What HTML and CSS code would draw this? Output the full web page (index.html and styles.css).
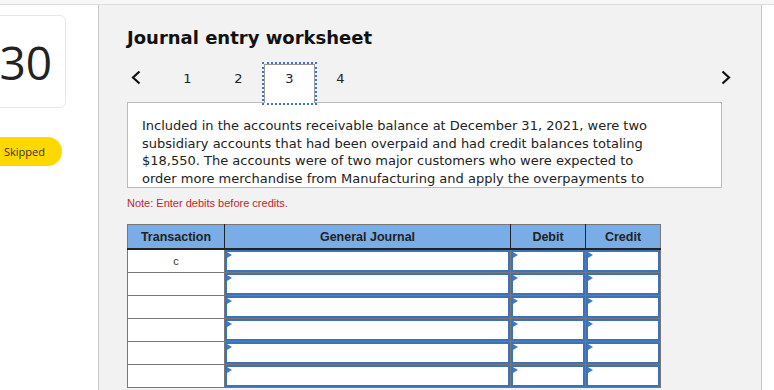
FILE: index.html
```html
<!DOCTYPE html>
<html>
<head>
<meta charset="utf-8">
<link rel="stylesheet" href="styles.css">
</head>
<body>
<div class="topbar"></div>
<div class="main">
  <aside class="side">
    <div class="qcard"><span class="qnum">30</span></div>
    <div class="pill">Skipped</div>
  </aside>
  <section class="panel">
    <h1 class="title">Journal entry worksheet</h1>
    <nav class="tabs">
      <span class="arrow arrow-left"><svg width="10" height="15" viewBox="0 0 10 15"><path d="M8.5 1.5 L2 7.5 L8.5 13.5" fill="none" stroke="#111" stroke-width="2.2"/></svg></span>
      <span class="tab">1</span>
      <span class="tab">2</span>
      <span class="tab active">3</span>
      <span class="tab">4</span>
      <span class="spacer"></span>
      <span class="arrow arrow-right"><svg width="10" height="15" viewBox="0 0 10 15"><path d="M1.5 1.5 L8 7.5 L1.5 13.5" fill="none" stroke="#111" stroke-width="2.2"/></svg></span>
    </nav>
    <div class="textbox">
      <p>Included in the accounts receivable balance at December 31, 2021, were two subsidiary accounts that had been overpaid and had credit balances totaling $18,550. The accounts were of two major customers who were expected to order more merchandise from Manufacturing and apply the overpayments to future purchases.</p>
    </div>
    <p class="note">Note: Enter debits before credits.</p>
    <table class="journal">
      <colgroup><col class="c1"><col class="c2"><col class="c3"><col class="c4"></colgroup>
      <thead>
        <tr><th>Transaction</th><th>General Journal</th><th>Debit</th><th>Credit</th></tr>
      </thead>
      <tbody>
        <tr><td class="tx">c</td><td><div class="inp"></div></td><td><div class="inp"></div></td><td><div class="inp"></div></td></tr>
        <tr><td class="tx"></td><td><div class="inp"></div></td><td><div class="inp"></div></td><td><div class="inp"></div></td></tr>
        <tr><td class="tx"></td><td><div class="inp"></div></td><td><div class="inp"></div></td><td><div class="inp"></div></td></tr>
        <tr><td class="tx"></td><td><div class="inp"></div></td><td><div class="inp"></div></td><td><div class="inp"></div></td></tr>
        <tr><td class="tx"></td><td><div class="inp"></div></td><td><div class="inp"></div></td><td><div class="inp"></div></td></tr>
        <tr><td class="tx"></td><td><div class="inp"></div></td><td><div class="inp"></div></td><td><div class="inp"></div></td></tr>
      </tbody>
    </table>
  </section>
</div>
</body>
</html>
```
FILE: styles.css
```css
html, body {
  margin: 0;
  padding: 0;
  background: #ffffff;
  overflow: hidden;
  height: 390px;
}
body {
  font-family: "DejaVu Sans", Verdana, sans-serif;
  color: #222;
}
.topbar {
  height: 4px;
  background: #f7f7f7;
  border-bottom: 1px solid #dcdcdc;
}
.main {
  display: flex;
  height: 385px;
}
.side {
  width: 98px;
  flex: none;
  display: flex;
  flex-direction: column;
}
.qcard {
  margin-top: 10px;
  margin-left: -40px;
  width: 106px;
  height: 93px;
  border: 1px solid #e8e8e8;
  border-radius: 6px;
  background: #fff;
  display: flex;
  align-items: center;
  justify-content: flex-end;
  padding-right: 13px;
  box-sizing: border-box;
}
.qnum {
  font-family: "Open Sans", sans-serif;
  font-size: 46px;
  color: #222;
  line-height: 1;
}
.pill {
  margin-top: 29px;
  margin-left: -20px;
  width: 82px;
  height: 29px;
  border-radius: 15px;
  background: #ffd800;
  font-family: "Open Sans", sans-serif;
  font-size: 11px;
  color: #333;
  display: flex;
  align-items: center;
  padding-left: 24px;
  box-sizing: border-box;
}
.panel {
  flex: none;
  width: 664px;
  box-sizing: border-box;
  background: #f2f2f2;
  border-left: 1px solid #c8c8c8;
  border-right: 1px solid #c8c8c8;
  padding: 22px 28px 0 28px;
}
.title {
  margin: 0;
  font-size: 18px;
  line-height: 22px;
  font-weight: bold;
  color: #111;
}
.tabs {
  display: flex;
  align-items: stretch;
  margin-top: 15px;
  height: 39px;
  margin-bottom: -1px;
  position: relative;
  z-index: 1;
}
.arrow {
  display: flex;
  align-items: flex-start;
  padding-top: 6px;
}
.arrow-left {
  width: 35px;
  padding-left: 4px;
  box-sizing: border-box;
}
.arrow-right {
  width: 16px;
  justify-content: flex-start;
  margin-right: -4px;
}
.spacer { flex: 1; }
.tab {
  width: 51px;
  box-sizing: border-box;
  text-align: center;
  font-size: 13px;
  line-height: 16px;
  padding-top: 7px;
  color: #222;
}
.tab.active {
  background: #fff;
  border: 1px solid #9a9a9a;
  border-bottom: none;
  outline: 2px dotted #3a78c6;
  outline-offset: 0;
  padding-top: 6px;
}
.textbox {
  width: 595px;
  height: 86px;
  box-sizing: border-box;
  background: #fff;
  border: 1px solid #bbbbbb;
  overflow: hidden;
  padding: 14px 14px 0 14px;
}
.textbox p {
  margin: 0;
  max-width: 524px;
  font-size: 13px;
  line-height: 17.5px;
  color: #222;
}
.note {
  margin: 8px 0 0 0;
  font-family: "Liberation Sans", Arial, sans-serif;
  font-size: 11px;
  line-height: 14px;
  color: #c0272d;
}
.journal {
  margin-top: 14px;
  border-collapse: collapse;
  table-layout: fixed;
  width: 533px;
  font-family: "Liberation Sans", Arial, sans-serif;
  border: 1px solid #777;
}
.c1 { width: 97px; }
.c2 { width: 286px; }
.c3 { width: 75px; }
.c4 { width: 75px; }
.journal th {
  background: #7aade5;
  height: 23px;
  padding: 0;
  font-size: 12.5px;
  font-weight: bold;
  color: #222;
  border-left: 1px solid #222;
  border-right: 1px solid #222;
  border-top: 1px solid #777;
  border-bottom: 2px solid #222;
}
.journal th:first-child { border-left: 1px solid #777; }
.journal th:last-child { border-right: 1px solid #777; }
.journal td {
  height: 22px;
  padding: 0;
  border: 1px solid #777;
  background: #fff;
}
.journal td.tx {
  text-align: center;
  font-size: 11px;
  color: #333;
}
.inp {
  position: relative;
  height: 22px;
  box-sizing: border-box;
  border: 2px solid #3e72b8;
  background: #fff;
}
.inp::before {
  content: "";
  position: absolute;
  top: 0;
  left: 0;
  border-left: 5px solid #3a7bcc;
  border-top: 3px solid transparent;
  border-bottom: 3px solid transparent;
}
```
